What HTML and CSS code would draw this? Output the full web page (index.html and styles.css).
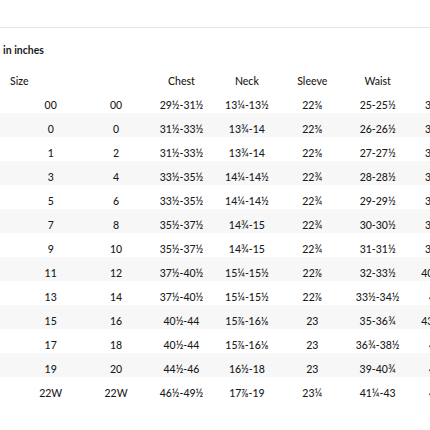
FILE: index.html
```html
<!DOCTYPE html>
<html>
<head>
<meta charset="utf-8">
<link rel="stylesheet" href="styles.css">
</head>
<body>
<div class="page">
  <div class="topbar"></div>
  <div class="unit">in inches</div>
  <div class="table">
    <div class="row head">
      <div class="cell size-h">Size</div>
      <div class="cell"></div>
      <div class="cell">Chest</div>
      <div class="cell">Neck</div>
      <div class="cell">Sleeve</div>
      <div class="cell">Waist</div>
      <div class="cell">Hip</div>
    </div>
    <div class="row"><div class="cell">00</div><div class="cell">00</div><div class="cell">29½-31½</div><div class="cell">13¼-13½</div><div class="cell">22⅝</div><div class="cell">25-25½</div><div class="cell">35-35½</div></div>
    <div class="row"><div class="cell">0</div><div class="cell">0</div><div class="cell">31½-33½</div><div class="cell">13¾-14</div><div class="cell">22⅝</div><div class="cell">26-26½</div><div class="cell">36-36½</div></div>
    <div class="row"><div class="cell">1</div><div class="cell">2</div><div class="cell">31½-33½</div><div class="cell">13¾-14</div><div class="cell">22⅝</div><div class="cell">27-27½</div><div class="cell">37-37½</div></div>
    <div class="row"><div class="cell">3</div><div class="cell">4</div><div class="cell">33½-35½</div><div class="cell">14¼-14½</div><div class="cell">22¾</div><div class="cell">28-28½</div><div class="cell">38-38½</div></div>
    <div class="row"><div class="cell">5</div><div class="cell">6</div><div class="cell">33½-35½</div><div class="cell">14¼-14½</div><div class="cell">22¾</div><div class="cell">29-29½</div><div class="cell">39-39½</div></div>
    <div class="row"><div class="cell">7</div><div class="cell">8</div><div class="cell">35½-37½</div><div class="cell">14¾-15</div><div class="cell">22¾</div><div class="cell">30-30½</div><div class="cell">39½-40</div></div>
    <div class="row"><div class="cell">9</div><div class="cell">10</div><div class="cell">35½-37½</div><div class="cell">14¾-15</div><div class="cell">22¾</div><div class="cell">31-31½</div><div class="cell">30½-31</div></div>
    <div class="row"><div class="cell">11</div><div class="cell">12</div><div class="cell">37½-40½</div><div class="cell">15¼-15½</div><div class="cell">22⅞</div><div class="cell">32-33½</div><div class="cell">40½-42½</div></div>
    <div class="row"><div class="cell">13</div><div class="cell">14</div><div class="cell">37½-40½</div><div class="cell">15¼-15½</div><div class="cell">22⅞</div><div class="cell">33½-34½</div><div class="cell">42-43</div></div>
    <div class="row"><div class="cell">15</div><div class="cell">16</div><div class="cell">40½-44</div><div class="cell">15⅞-16⅛</div><div class="cell">23</div><div class="cell">35-36¾</div><div class="cell">43½-45½</div></div>
    <div class="row"><div class="cell">17</div><div class="cell">18</div><div class="cell">40½-44</div><div class="cell">15⅞-16⅛</div><div class="cell">23</div><div class="cell">36¾-38½</div><div class="cell">45-47</div></div>
    <div class="row"><div class="cell">19</div><div class="cell">20</div><div class="cell">44½-46</div><div class="cell">16½-18</div><div class="cell">23</div><div class="cell">39-40¾</div><div class="cell">47-49</div></div>
    <div class="row"><div class="cell">22W</div><div class="cell">22W</div><div class="cell">46½-49½</div><div class="cell">17⅞-19</div><div class="cell">23¼</div><div class="cell">41¼-43</div><div class="cell">49-51</div></div>
  </div>
</div>
</body>
</html>
```

FILE: styles.css
```css
html, body {
  margin: 0;
  padding: 0;
  background: #fff;
  overflow: hidden;
}
body {
  width: 430px;
  height: 430px;
  font-family: "Lato", "Liberation Sans", sans-serif;
  color: #1a1a1a;
}
.page {
  width: 430px;
  overflow: hidden;
}
.topbar {
  height: 27px;
  border-bottom: 1px solid #e6e6e6;
}
.unit {
  font-size: 10.5px;
  font-weight: 700;
  padding: 16px 0 0 3px;
  line-height: 12px;
  height: 20px;
}
.table {
  width: 520px;
  margin-top: 1px;
}
.row {
  display: grid;
  grid-template-columns: repeat(7, 65.4px);
  padding-left: 18px;
  height: 24px;
  box-sizing: border-box;
  padding-top: 10px;
  font-size: 10.5px;
  line-height: 12px;
  font-weight: 500;
}
.row:nth-child(odd) {
  background: #f7f7f7;
}
.row.head {
  background: #fff;
}
.cell {
  text-align: center;
  white-space: nowrap;
}
.size-h {
  text-align: left;
  margin-left: -8px;
}
```
